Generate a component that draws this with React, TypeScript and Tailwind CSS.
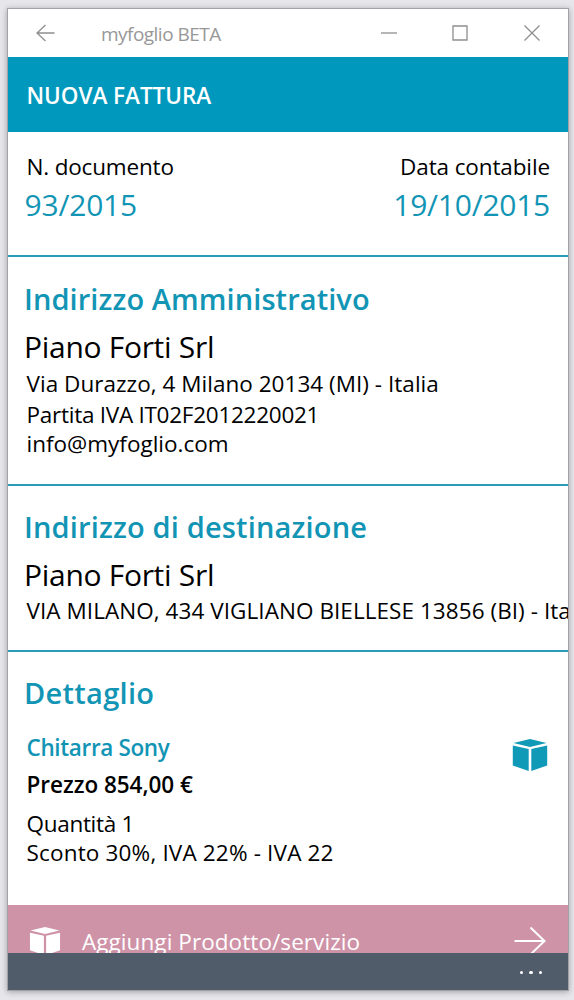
import type { ReactNode } from 'react'

interface SectionProps {
  className?: string
  children: ReactNode
}

function Section({ className = '', children }: SectionProps) {
  return (
    <section className={`flex-shrink-0 border-b-2 border-[#2a9cb8] pl-[18.5px] pr-[18px] ${className}`}>
      {children}
    </section>
  )
}

function BoxIcon({ className }: { className: string }) {
  return (
    <svg viewBox="0 0 36 32" fill="currentColor" className={className}>
      <path d="M18 0 L34.5 4 L18 8 L1.5 4 Z" />
      <path d="M0.8 6.5 L16.7 10 V32 L0.8 26.5 Z" />
      <path d="M35.2 6.5 L19.3 10 V32 L35.2 26.5 Z" />
    </svg>
  )
}

function TitleBar() {
  return (
    <div className="flex h-12 flex-shrink-0 items-center text-[#8e8e8e]">
      <svg viewBox="0 0 20 18" fill="none" stroke="currentColor" strokeWidth="1.3" className="ml-7 h-[18px] w-5">
        <path d="M18.5 9 H1 M9.5 1 L1 9 L9.5 17" />
      </svg>
      <span className="ml-[45px] flex-1 pt-px text-[19px] leading-[48px] tracking-[-0.53px] text-[#989898]">myfoglio BETA</span>
      <svg viewBox="0 0 160 18" fill="none" stroke="currentColor" strokeWidth="1.3" className="mr-[28px] h-[18px] w-[160px]">
        <path d="M1 9 H17" />
        <path d="M73 2 H87 V16 H73 Z" />
        <path d="M144.5 1.5 L159.5 16.5 M159.5 1.5 L144.5 16.5" />
      </svg>
    </div>
  )
}

export default function App() {
  return (
    <div className="h-[1000px] w-[574px] overflow-hidden bg-[#e6e6eb] pl-[7px] pt-2 font-['Open_Sans','Noto_Sans',sans-serif] text-[22.5px] text-black">
      <div className="flex h-[983px] w-[562px] flex-col overflow-hidden border border-[#a2a2a8] bg-white shadow-[0_1px_6px_rgba(0,0,0,0.3)]">
        <TitleBar />

        <header className="flex h-[75px] flex-shrink-0 items-center bg-[#0099bd] pl-[18.5px] pt-[3px]">
          <h1 className="text-[22.5px] font-semibold leading-none tracking-[-0.03px] text-white">NUOVA FATTURA</h1>
        </header>

        <Section className="flex h-[125px] justify-between pt-[18px]">
          <div>
            <p className="leading-[34px] tracking-[-0.18px]">N. documento</p>
            <p className="-ml-0.5 text-[30px] leading-[42px] tracking-[-0.2px] text-[#1295b5]">93/2015</p>
          </div>
          <div className="text-right">
            <p className="leading-[34px] tracking-[-0.12px]">Data contabile</p>
            <p className="text-[30px] leading-[42px] tracking-[-0.25px] text-[#1295b5]">19/10/2015</p>
          </div>
        </Section>

        <Section className="h-[229px] pt-[17px]">
          <h2 className="-ml-[2.5px] text-[29px] font-semibold leading-[49px] tracking-[0.08px] text-[#1295b5]">Indirizzo Amministrativo</h2>
          <p className="-ml-[2.5px] text-[30px] leading-[47px] tracking-[-0.3px]">Piano Forti Srl</p>
          <p className="leading-[27px] tracking-[0.03px]">Via Durazzo, 4 Milano 20134 (MI) - Italia</p>
          <p className="leading-[35px] tracking-[-0.26px]">Partita IVA IT02F2012220021</p>
          <p className="leading-[24px]">info@myfoglio.com</p>
        </Section>

        <Section className="h-[166px] pt-[17px]">
          <h2 className="-ml-[2.5px] text-[29px] font-semibold leading-[48px] tracking-[0.16px] text-[#1295b5]">Indirizzo di destinazione</h2>
          <p className="-ml-[2.5px] text-[30px] leading-[48px] tracking-[-0.3px]">Piano Forti Srl</p>
          <p className="whitespace-nowrap leading-[23px] tracking-[0.06px]">VIA MILANO, 434 VIGLIANO BIELLESE 13856 (BI) - Italia</p>
        </Section>

        <section className="h-[253px] flex-shrink-0 pl-[18.5px] pr-5 pt-[17px]">
          <h2 className="-ml-[2.5px] text-[29px] font-semibold leading-[48px] tracking-[0.3px] text-[#1295b5]">Dettaglio</h2>
          <div className="mt-3.5 flex justify-between">
            <div>
              <p className="font-semibold leading-[34px] tracking-[-0.35px] text-[#1295b5]">Chitarra Sony</p>
              <p className="font-semibold leading-10 tracking-[-0.03px]">Prezzo 854,00 €</p>
              <p className="leading-[38px] tracking-[-0.3px]">Quantità 1</p>
              <p className="leading-5 tracking-[0.17px]">Sconto 30%, IVA 22% - IVA 22</p>
            </div>
            <BoxIcon className="mt-2 h-8 w-9 text-[#1199b8]" />
          </div>
        </section>

        <div className="h-12 flex-shrink-0 overflow-hidden bg-[#cf93a8] text-white">
          <div className="flex h-[71px] items-center pl-[21px] pr-[22px]">
            <BoxIcon className="h-7 w-8" />
            <span className="ml-[21px] flex-1 pt-0.5 tracking-[0.07px]">Aggiungi Prodotto/servizio</span>
            <svg viewBox="0 0 32 28" fill="none" stroke="currentColor" strokeWidth="2" className="h-7 w-8">
              <path d="M0.5 14 H30.5 M16.5 0.5 L30.5 14 L16.5 27.5" />
            </svg>
          </div>
        </div>

        <footer className="flex h-[37px] flex-shrink-0 items-center justify-end gap-1.5 bg-[#505c6a] pr-[26px] pt-0.5">
          <i className="size-[3.5px] rounded-full bg-white" />
          <i className="size-[3.5px] rounded-full bg-white" />
          <i className="size-[3.5px] rounded-full bg-white" />
        </footer>
      </div>
    </div>
  )
}
